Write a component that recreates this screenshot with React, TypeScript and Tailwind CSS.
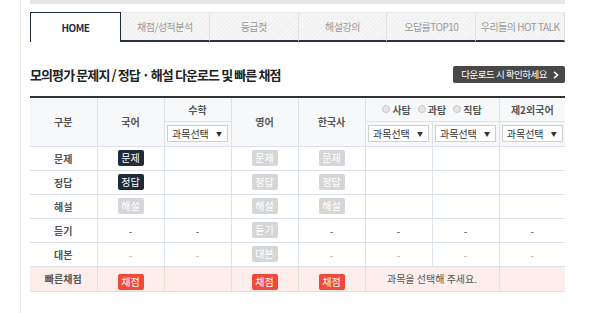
import React from "react";

const tabs = ["HOME", "채점/성적분석", "등급컷", "해설강의", "오답률TOP10", "우리들의 HOT TALK"];

type Btn = "dark" | "gray" | "red";

const Chip = ({ label, kind }: { label: string; kind: Btn }) => {
  const tone =
    kind === "dark"
      ? "bg-[#1f2b3b] text-white"
      : kind === "red"
      ? "bg-[#f24a3a] text-white"
      : "bg-[#d6d6d6] text-white";
  return (
    <span className={`inline-flex h-[16px] w-[26px] items-center justify-center rounded-[2px] text-[10px] font-normal leading-none ${tone}`}>
      {label}
    </span>
  );
};

const Select = () => (
  <div className="mx-auto flex h-[17px] w-[61px] items-center justify-between border border-[#cfcfcf] bg-white pl-[4px] pr-[5px] text-[10px] font-normal leading-none text-[#333]">
    <span>과목선택</span>
    <span className="text-[6px] text-[#333]">▼</span>
  </div>
);

const Radio = ({ label }: { label: string }) => (
  <span className="inline-flex items-center gap-[2px]">
    <span className="inline-block h-[8px] w-[8px] rounded-full border border-[#c8c8c8] bg-[#e6e6e6]" />
    <span>{label}</span>
  </span>
);

const Dash = ({ light }: { light?: boolean }) => (
  <span className={light ? "text-[#aaa]" : "text-[#444]"}>-</span>
);

export default function App() {
  const cell = "border border-[#dde3ec] text-center align-middle";
  const head = "border border-[#dde3ec] bg-[#f7f8fa] text-center align-middle text-[10px] font-bold text-[#555]";
  const label = "border border-[#dde3ec] text-center align-middle text-[10px] font-bold text-[#555]";
  const pink = "border border-[#f1dcd8] bg-[#fdeeec] text-center align-middle";

  const rows: { name: string; cells: React.ReactNode[] }[] = [
    {
      name: "문제",
      cells: [<Chip label="문제" kind="dark" />, null, <Chip label="문제" kind="gray" />, <Chip label="문제" kind="gray" />, null, null, null],
    },
    {
      name: "정답",
      cells: [<Chip label="정답" kind="dark" />, null, <Chip label="정답" kind="gray" />, <Chip label="정답" kind="gray" />, null, null, null],
    },
    {
      name: "해설",
      cells: [<Chip label="해설" kind="gray" />, null, <Chip label="해설" kind="gray" />, <Chip label="해설" kind="gray" />, null, null, null],
    },
    {
      name: "듣기",
      cells: [<Dash />, <Dash />, <Chip label="듣기" kind="gray" />, <Dash />, <Dash />, <Dash />, <Dash />],
    },
    {
      name: "대본",
      cells: [<Dash light />, <Dash light />, <Chip label="대본" kind="gray" />, <Dash light />, <Dash light />, <Dash light />, <Dash light />],
    },
  ];

  return (
    <div
      className="relative min-h-[313px] w-[600px] bg-white"
      style={{ fontFamily: '"Noto Sans CJK KR", "Noto Sans", sans-serif' }}
    >
      <div className="absolute bottom-0 left-[20px] top-0 w-px bg-[#eeeeee]" />
      <div className="ml-[30px] w-[535px]">
        {/* top strip */}
        <div className="h-[4px] bg-[#e6e6e6]" />

        {/* tabs */}
        <div className="mt-[8px] flex h-[30px]">
          {tabs.map((t, i) =>
            i === 0 ? (
              <div
                key={t}
                className="flex h-full w-[91px] items-center justify-center border-x-[1.5px] border-t-[1.5px] border-[#1f2a38] bg-white text-[10px] font-bold tracking-[-0.5px] text-[#1f2a4a]"
              >
                {t}
              </div>
            ) : (
              <div
                key={t}
                className="flex h-full flex-1 items-center justify-center border-b-2 border-r border-t border-b-[#2a3441] border-r-[#e2e2e2] border-t-[#eaeaea] bg-[repeating-linear-gradient(135deg,#f6f6f6_0px,#f6f6f6_2px,#efefef_2px,#efefef_3px)] text-[10px] tracking-[-0.5px] text-[#9a9a9a]"
              >
                {t}
              </div>
            )
          )}
        </div>

        {/* title row */}
        <div className="mt-[24px] flex h-[18px] items-end justify-between">
          <h2 className="text-[13px] font-bold leading-[18px] tracking-[-0.9px] text-[#222]">
            모의평가 문제지 / 정답 · 해설 다운로드 및 빠른 채점
          </h2>
          <button className="mb-[1px] flex h-[17px] items-center gap-[6px] self-start rounded-[2px] bg-[#484848] pl-[8px] pr-[6px] text-[9.5px] tracking-[-0.5px] text-white">
            다운로드 시 확인하세요
            <svg width="6" height="8" viewBox="0 0 6 8">
              <path d="M1 0.8 L4.6 4 L1 7.2" fill="none" stroke="#fff" strokeWidth="1.6" />
            </svg>
          </button>
        </div>

        {/* table */}
        <table className="mt-[12px] w-[535px] table-fixed border-collapse border-t-2 border-t-[#333]">
          <colgroup>
            <col className="w-[67px]" />
            <col className="w-[67px]" />
            <col className="w-[67px]" />
            <col className="w-[67px]" />
            <col className="w-[67px]" />
            <col className="w-[67px]" />
            <col className="w-[67px]" />
            <col className="w-[66px]" />
          </colgroup>
          <thead>
            <tr className="h-[24px]">
              <th rowSpan={2} className={`${head} border-l-0`}>구분</th>
              <th rowSpan={2} className={head}>국어</th>
              <th className={head}>수학</th>
              <th rowSpan={2} className={head}>영어</th>
              <th rowSpan={2} className={head}>한국사</th>
              <th colSpan={2} className={head}>
                <div className="flex items-center justify-center gap-[7px]">
                  <Radio label="사탐" />
                  <Radio label="과탐" />
                  <Radio label="직탐" />
                </div>
              </th>
              <th className={`${head} border-r-0`}>제2외국어</th>
            </tr>
            <tr className="h-[25px]">
              <th className={head}><Select /></th>
              <th className={head}><Select /></th>
              <th className={head}><Select /></th>
              <th className={`${head} border-r-0`}><Select /></th>
            </tr>
          </thead>
          <tbody>
            {rows.map((r) => (
              <tr key={r.name} className="h-[24px]">
                <td className={`${label} border-l-0`}>{r.name}</td>
                {r.cells.map((c, i) => (
                  <td key={i} className={`${cell} text-[10px] ${i === 6 ? "border-r-0" : ""}`}>
                    {c}
                  </td>
                ))}
              </tr>
            ))}
            <tr className="h-[24px]">
              <td className={`${pink} border-l-0 text-[10px] font-bold text-[#555]`}>빠른채점</td>
              <td className={pink}><Chip label="채점" kind="red" /></td>
              <td className={pink} />
              <td className={pink}><Chip label="채점" kind="red" /></td>
              <td className={pink}><Chip label="채점" kind="red" /></td>
              <td colSpan={2} className={`${pink} text-[10px] text-[#555]`}>과목을 선택해 주세요.</td>
              <td className={`${pink} border-r-0`} />
            </tr>
          </tbody>
        </table>
      </div>
    </div>
  );
}
